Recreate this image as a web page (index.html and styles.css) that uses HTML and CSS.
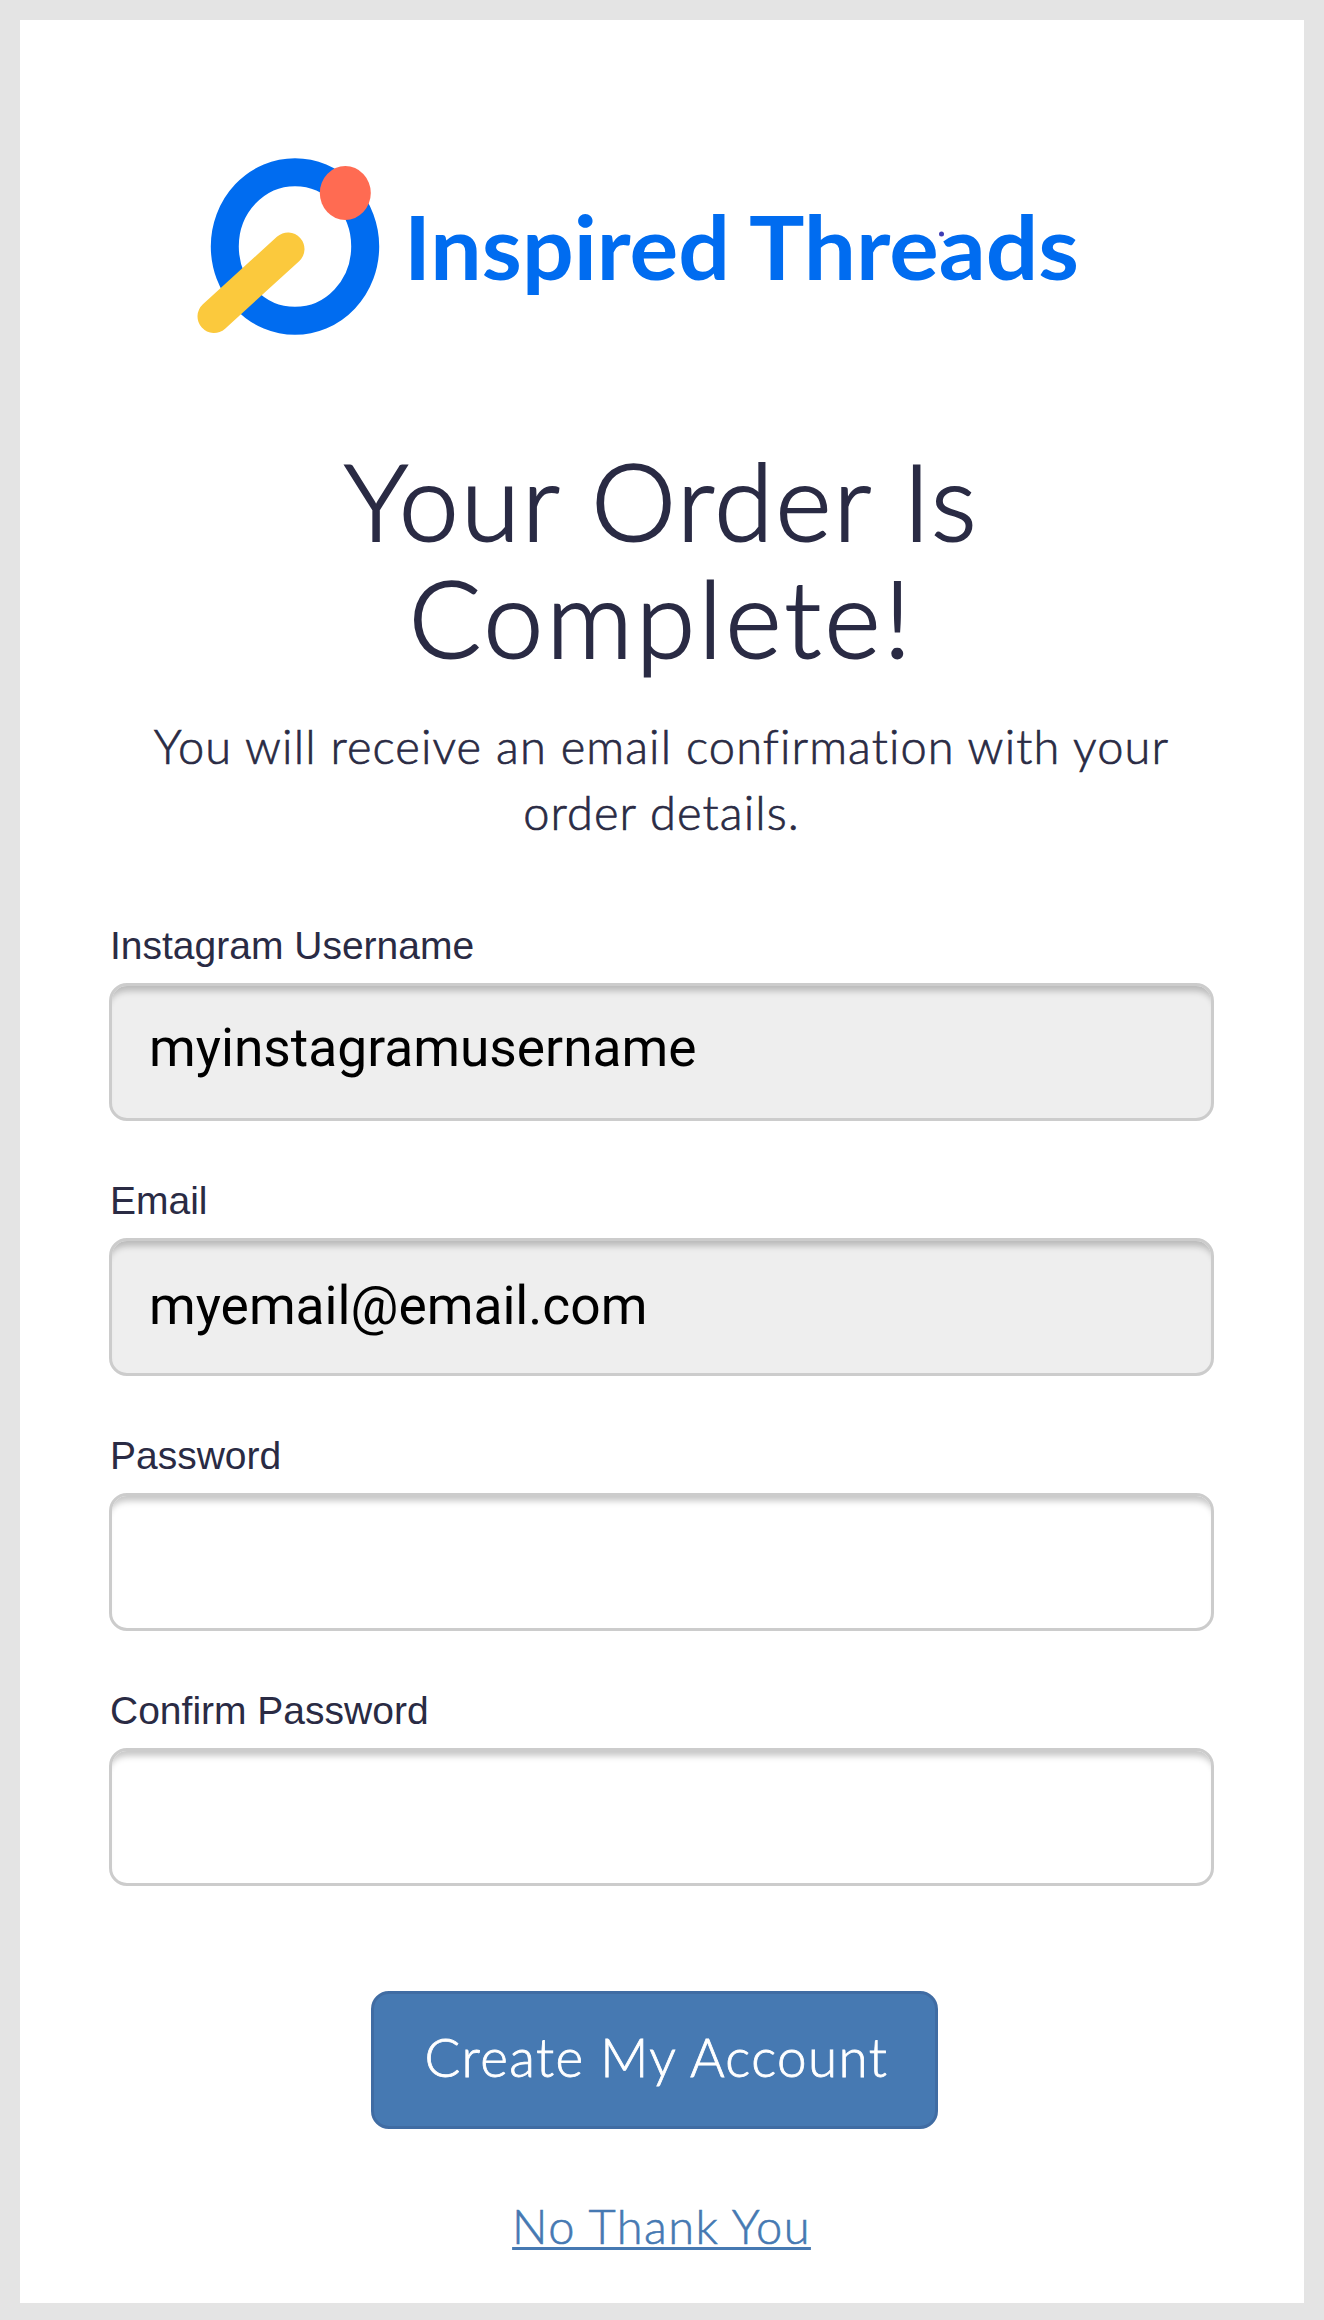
FILE: index.html
```html
<!DOCTYPE html>
<html lang="en">
<head>
<meta charset="utf-8">
<title>Your Order Is Complete!</title>
<link rel="stylesheet" href="styles.css">
</head>
<body>
<main class="card">
  <svg class="logo" viewBox="0 0 900 200" role="img" aria-label="Inspired Threads">
    <ellipse cx="105" cy="96.500" rx="70.200" ry="74.300" fill="none" stroke="#006cf0" stroke-width="28"/>
    <ellipse cx="155.300" cy="43" rx="25.500" ry="27" fill="#ff6b52"/>
    <path d="M24 166.500 98 99" stroke="#fbc93d" stroke-width="33" stroke-linecap="round"/>
    <text class="logo-text" x="214" y="130.300" textLength="326" lengthAdjust="spacingAndGlyphs">Inspired</text>
    <text class="logo-text" x="559" y="130.300" textLength="330" lengthAdjust="spacingAndGlyphs">Threads</text>
    <circle cx="751.500" cy="84" r="2.500" fill="#3f3db5"/>
  </svg>
  <h1 class="title"><span class="title-first">Your Order Is</span><br><span class="title-second">Complete!</span></h1>
  <p class="message">You will receive an email confirmation with your<br>order details.</p>
  <form class="form">
    <div class="field">
      <label class="label" for="username">Instagram Username</label>
      <input class="input" id="username" type="text" value="myinstagramusername" disabled>
    </div>
    <div class="field">
      <label class="label" for="email">Email</label>
      <input class="input input-email" id="email" type="text" value="myemail@email.com" disabled>
    </div>
    <div class="field">
      <label class="label" for="password">Password</label>
      <input class="input" id="password" type="password">
    </div>
    <div class="field">
      <label class="label" for="confirm">Confirm Password</label>
      <input class="input" id="confirm" type="password">
    </div>
    <button class="submit" type="button">Create My Account</button>
    <a class="skip" href="#">No Thank You</a>
  </form>
</main>
</body>
</html>
```
FILE: styles.css
```css
* { box-sizing: border-box; }
body {
  margin: 0;
  padding: 20px 20px 17px;
  height: 2320px;
  background: #e4e4e4;
  color: #2a2b44;
  font-family: Lato, "Open Sans", sans-serif;
  font-weight: 300;
  font-variant-ligatures: none;
}
.card {
  height: 2283px;
  padding: 130px 90px 0 89px;
  background: #fff;
}
.logo {
  display: block;
  width: 900px;
  height: 200px;
  margin-left: 81px;
}
.logo-text {
  font-family: Lato, sans-serif;
  font-weight: 700;
  font-size: 88px;
  fill: #006cf0;
}
.title {
  margin: 91px 0 0;
  font-size: 107px;
  line-height: 117px;
  font-weight: 300;
  text-align: center;
  -webkit-text-stroke: 2px #2a2b44;
}
.title-first { letter-spacing: 2.3px; }
.title-second { letter-spacing: 3.4px; }
.message {
  margin: 38px -40px 0;
  font-size: 47px;
  line-height: 66px;
  letter-spacing: 1.1px;
  text-align: center;
  white-space: nowrap;
  -webkit-text-stroke: .7px #2a2b44;
}
.form {
  display: flex;
  flex-direction: column;
  margin-top: 63px;
}
.field {
  display: flex;
  flex-direction: column;
  height: 255px;
}
.label {
  height: 75px;
  padding: 16px 0 0 1px;
  font: 400 39px/44px "Liberation Sans", Arial, sans-serif;
}
.input {
  width: 1105px;
  height: 138px;
  padding: 0 37px 8px;
  border: 3px solid #ccc;
  border-radius: 18px;
  background: #fff;
  box-shadow: inset 0 10px 6px -5px rgba(0, 0, 0, .22);
  color: #000;
  font: 400 53.3px Roboto, sans-serif;
}
.input:disabled { background: #eee; }
.input-email { padding-bottom: 2px; }
.submit {
  width: 567px;
  height: 138px;
  margin: 63px 0 0 262px;
  padding: 0 0 8px 4px;
  border: 3px solid #406ca3;
  border-radius: 18px;
  background: #4679b2;
  color: #fff;
  font: 300 53px Lato, sans-serif;
  letter-spacing: 1.4px;
  -webkit-text-stroke: .8px #fff;
}
.skip {
  align-self: center;
  margin-top: 67px;
  color: #4679b2;
  font-size: 47px;
  line-height: 60px;
  letter-spacing: 1.4px;
  text-decoration: underline;
  text-decoration-thickness: 3px;
  text-underline-offset: 3px;
  text-decoration-skip-ink: none;
  -webkit-text-stroke: .6px #4679b2;
}
```
